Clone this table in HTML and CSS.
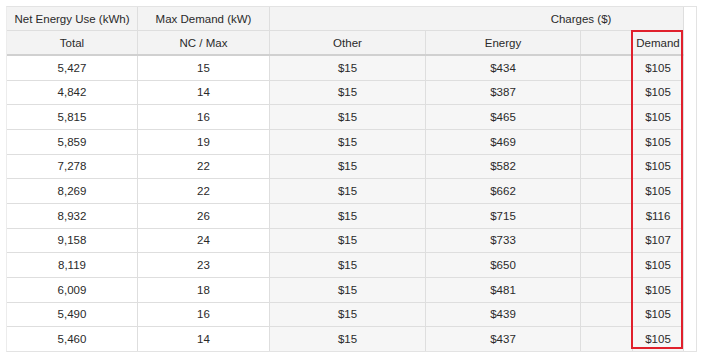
FILE: index.html
```html
<!DOCTYPE html>
<html lang="en">
<head>
    <meta charset="UTF-8">
    <meta name="viewport" content="width=device-width, initial-scale=1.0">
    <title>Charges Table</title>
    <link rel="stylesheet" href="styles.css">
</head>
<body>
    <div class="table-wrap">
        <table class="usage">
            <colgroup>
                <col class="c-total">
                <col class="c-max">
                <col class="c-other">
                <col class="c-energy">
                <col class="c-blank">
                <col class="c-demand">
            </colgroup>
            <thead>
                <tr class="group-row">
                    <th>Net Energy Use (kWh)</th>
                    <th>Max Demand (kW)</th>
                    <th colspan="4" class="charges">Charges ($)</th>
                </tr>
                <tr class="sub-row">
                    <th>Total</th>
                    <th>NC / Max</th>
                    <th>Other</th>
                    <th>Energy</th>
                    <th></th>
                    <th>Demand</th>
                </tr>
            </thead>
            <tbody>
                <tr><td>5,427</td><td>15</td><td class="shade">$15</td><td class="shade">$434</td><td class="shade"></td><td class="shade">$105</td></tr>
                <tr><td>4,842</td><td>14</td><td class="shade">$15</td><td class="shade">$387</td><td class="shade"></td><td class="shade">$105</td></tr>
                <tr><td>5,815</td><td>16</td><td class="shade">$15</td><td class="shade">$465</td><td class="shade"></td><td class="shade">$105</td></tr>
                <tr><td>5,859</td><td>19</td><td class="shade">$15</td><td class="shade">$469</td><td class="shade"></td><td class="shade">$105</td></tr>
                <tr><td>7,278</td><td>22</td><td class="shade">$15</td><td class="shade">$582</td><td class="shade"></td><td class="shade">$105</td></tr>
                <tr><td>8,269</td><td>22</td><td class="shade">$15</td><td class="shade">$662</td><td class="shade"></td><td class="shade">$105</td></tr>
                <tr><td>8,932</td><td>26</td><td class="shade">$15</td><td class="shade">$715</td><td class="shade"></td><td class="shade">$116</td></tr>
                <tr><td>9,158</td><td>24</td><td class="shade">$15</td><td class="shade">$733</td><td class="shade"></td><td class="shade">$107</td></tr>
                <tr><td>8,119</td><td>23</td><td class="shade">$15</td><td class="shade">$650</td><td class="shade"></td><td class="shade">$105</td></tr>
                <tr><td>6,009</td><td>18</td><td class="shade">$15</td><td class="shade">$481</td><td class="shade"></td><td class="shade">$105</td></tr>
                <tr><td>5,490</td><td>16</td><td class="shade">$15</td><td class="shade">$439</td><td class="shade"></td><td class="shade">$105</td></tr>
                <tr><td>5,460</td><td>14</td><td class="shade">$15</td><td class="shade">$437</td><td class="shade"></td><td class="shade">$105</td></tr>
            </tbody>
        </table>
        <div class="highlight"></div>
    </div>
</body>
</html>
```

FILE: styles.css
```css
body {
    margin: 0;
    padding: 6px;
    background-color: #fff;
    font-family: 'Liberation Sans', Arial, sans-serif;
    font-size: 11.5px;
    color: #2a2a2a;
}
.table-wrap {
    position: relative;
    width: 689px;
    height: 344px;
    border: 1px solid #e3e3e3;
    border-left-color: #ececec;
    overflow: hidden;
    background-color: #fff;
}
.usage {
    border-collapse: collapse;
    table-layout: fixed;
    width: 677px;
    margin: -1px 0 0 -1px;
}
.c-total { width: 131px; }
.c-max { width: 132px; }
.c-other { width: 156px; }
.c-energy { width: 155px; }
.c-blank { width: 52px; }
.c-demand { width: 51px; }
.usage th,
.usage td {
    border: 1px solid #dedede;
    text-align: center;
    font-weight: normal;
    padding: 0 2px;
    white-space: nowrap;
}
.usage thead th {
    background-color: #f3f3f3;
}
.group-row th {
    height: 23px;
}
.sub-row th {
    height: 23px;
    border-bottom: 2px solid #d0d0d0;
}
.usage th.charges {
    padding: 0 0 0 209px;
}
.usage tbody td {
    height: 23.67px;
    background-color: #fff;
}
.usage tbody td.shade {
    background-color: #f6f6f6;
}
.highlight {
    position: absolute;
    left: 624px;
    top: 23px;
    width: 48px;
    height: 315px;
    border: 2px solid #e0202c;
}
```
